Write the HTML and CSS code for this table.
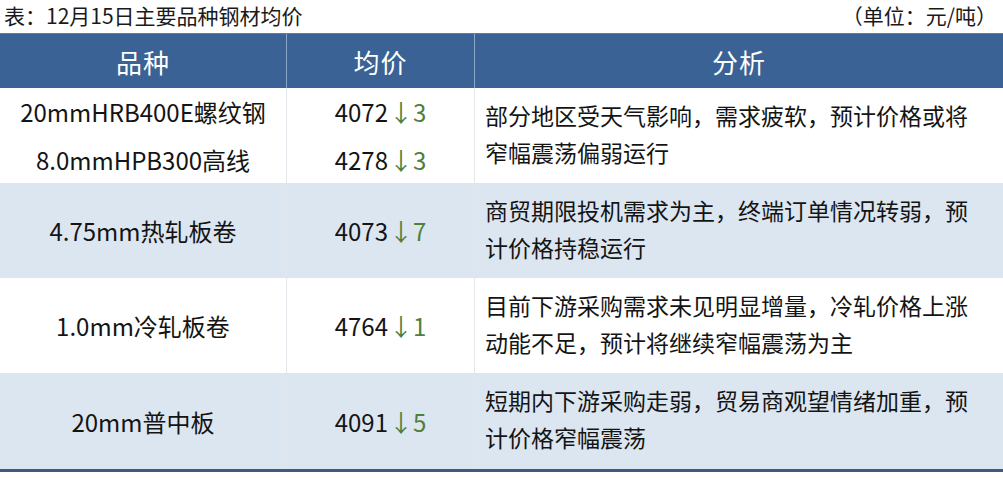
FILE: index.html
```html
<!DOCTYPE html>
<html lang="zh">
<head>
<meta charset="utf-8">
<link rel="stylesheet" href="styles.css">
</head>
<body>
<div class="caption">
  <span class="title">表：12月15日主要品种钢材均价</span>
  <span class="unit">（单位：元/吨）</span>
</div>
<div class="table">
  <div class="hcell c1">品种</div>
  <div class="hcell c2">均价</div>
  <div class="hcell c3">分析</div>

  <div class="cell c1 multi"><div>20mmHRB400E螺纹钢</div><div>8.0mmHPB300高线</div></div>
  <div class="cell c2 multi"><div>4072<span class="down">↓3</span></div><div>4278<span class="down">↓3</span></div></div>
  <div class="cell c3 text">部分地区受天气影响，需求疲软，预计价格或将窄幅震荡偏弱运行</div>

  <div class="cell c1 alt">4.75mm热轧板卷</div>
  <div class="cell c2 alt">4073<span class="down">↓7</span></div>
  <div class="cell c3 text alt">商贸期限投机需求为主，终端订单情况转弱，预计价格持稳运行</div>

  <div class="cell c1">1.0mm冷轧板卷</div>
  <div class="cell c2">4764<span class="down">↓1</span></div>
  <div class="cell c3 text">目前下游采购需求未见明显增量，冷轧价格上涨动能不足，预计将继续窄幅震荡为主</div>

  <div class="cell c1 alt">20mm普中板</div>
  <div class="cell c2 alt">4091<span class="down">↓5</span></div>
  <div class="cell c3 text alt">短期内下游采购走弱，贸易商观望情绪加重，预计价格窄幅震荡</div>
</div>
</body>
</html>
```
FILE: styles.css
```css
html, body {
  margin: 0;
  padding: 0;
  background: #ffffff;
}
body {
  width: 1003px;
  height: 500px;
  overflow: hidden;
  font-family: "Noto Sans CJK SC", "Noto Sans", sans-serif;
  color: #141414;
}
.caption {
  height: 33px;
  display: flex;
  justify-content: space-between;
  align-items: center;
  padding: 0 6px 2px 4px;
  font-size: 21px;
  line-height: 1;
  color: #1a1a1a;
  box-sizing: border-box;
}
.table {
  display: grid;
  grid-template-columns: 287px 188px 1fr;
  grid-template-rows: 55px 95px 95px 95px 96px;
  border-bottom: 3px solid #3f5b7c;
}
.hcell {
  background: #3a6294;
  color: #ffffff;
  font-size: 26px;
  display: flex;
  align-items: center;
  justify-content: center;
  letter-spacing: 1px;
  border-top: 1px solid #5b7ba3;
}
.hcell.c1, .hcell.c2 {
  border-right: 1px solid #8aa6c9;
}
.cell {
  display: flex;
  align-items: center;
  justify-content: center;
  font-size: 24px;
  background: #ffffff;
}
.cell.c1, .cell.c2 {
  border-right: 1px solid #e3e7ec;
}
.cell.alt {
  background: #dce6f1;
}
.multi {
  flex-direction: column;
  line-height: 48px;
}
.down {
  color: #4f7f3a;
  margin-left: 1px;
}
.text {
  justify-content: flex-start;
  font-size: 23px;
  line-height: 37px;
  padding: 0 14px 4px 10px;
}
```
